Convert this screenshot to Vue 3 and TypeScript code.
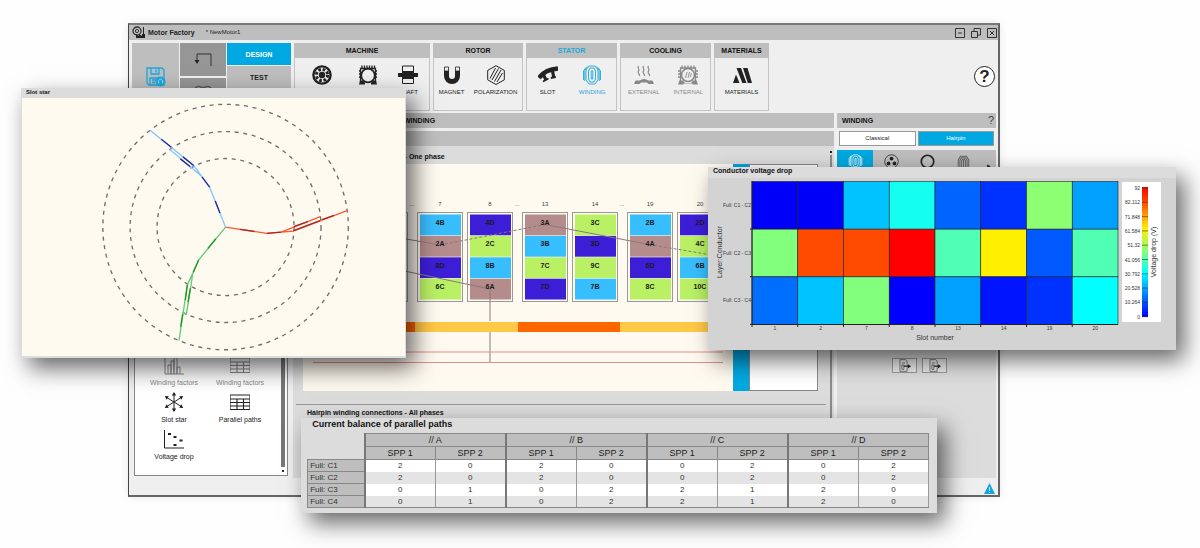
<script setup lang="ts">
interface Tool { label: string; icon: string; state?: string; name?: string }
interface Group { title: string; key: string; active?: boolean; tools: Tool[] }
interface Slot { x: number; n: string; cells: string[] }

const icons: Record<string, string> = {
  motor: '<circle cx="10" cy="10" r="8.6" fill="none" stroke="currentColor" stroke-width="2.4"/><circle cx="10" cy="10" r="5.6" fill="none" stroke="currentColor" stroke-width="3" stroke-dasharray="2.6 1.8"/><circle cx="10" cy="10" r="3.2" fill="currentColor"/>',
  housing: '<circle cx="10" cy="10.5" r="6.8" fill="none" stroke="currentColor" stroke-width="1.8"/><path d="M2.5 17V3.5h15V17M4 3V.5M6.5 3V.5M9 3V.5M11.5 3V.5M14 3V.5M16.500 3V.5M1 6h2M1 9h2M1 12h2M17 6h2M17 9h2M17 12h2" fill="none" stroke="currentColor" stroke-width="1.3"/><path d="M1 19.500l1-4 3 0 2 2.500v1.500zM19 19.500l-1-4-3 0-2 2.500v1.500z" fill="currentColor"/>',
  shaft: '<path d="M4.500 1h11v17.500h-11z" fill="none" stroke="currentColor" stroke-width="1"/><path d="M0 8h4V6h12v2h4v4h-4v2H4v-2H0z" fill="currentColor"/>',
  magnet: '<path d="M2 6v5a8 8 0 0 0 16 0V6h-5v5a3 3 0 0 1-6 0V6z" fill="currentColor"/><path d="M2.500 2h4v4h-4zM13.500 2h4v4h-4z" fill="none" stroke="currentColor" stroke-width=".8"/>',
  polar: '<path d="M10 .7l8.300 4.700v9.400L10 19.500l-8.300-4.700V5.400zM4 13.500L9.500 3M6 15L12.500 3.500M8.500 16.500L15 5M11 17L16.500 8" fill="none" stroke="currentColor" stroke-width="1"/>',
  slot: '<path d="M1 13Q7 4.500 20 3.500" fill="none" stroke="currentColor" stroke-width="4.500"/><path d="M5.500 10l2.500 5M14.500 6l1.200 6" fill="none" stroke="currentColor" stroke-width="3.200"/><path d="M5 16.500l5.500-3M12.800 13l5-1" stroke="currentColor" stroke-width="1.800"/>',
  winding: '<path d="M7 1h6l3 4v10l-3 4H7l-3-4V5zM8 3h4l1.500 3v8L12 17H8l-1.500-3V6zM9.200 6h1.600v8H9.200zM4 2.500L1.500 6v9M16 2.500L18.500 6v9M5.500 1.500L2.800 5.500V16M14.500 1.500l2.700 4V16" fill="none" stroke="currentColor" stroke-width=".9"/>',
  external: '<path d="M4.500 1c-2 2 2 3 0 5s2 3 1 5M9.500 1c-2 2 2 3 0 5s2 3 1 5M14.500 1c-2 2 2 3 0 5s2 3 1 5" fill="none" stroke="currentColor" stroke-width="1.200"/><path d="M0 19l1.500-3.500h4Q10 12.500 14.500 15.500h4L20 19h-5.500L13 17.500H7L5.500 19z" fill="currentColor"/>',
  internal: '<circle cx="10" cy="10" r="6.500" fill="none" stroke="currentColor" stroke-width="1.500"/><path d="M2.500 17V3h15v14M4 3V.500M7 3V.500M10 3V.500M13 3V.500M16 3V.500M0 6h2M0 9h2M0 12h2M18 6h2M18 9h2M18 12h2" fill="none" stroke="currentColor" stroke-width="1.300"/><path d="M0 19.500l1.500-4h3.500l2 2.500h6l2-2.500h3.500l1.500 4h-5l-1-1H6l-1 1z" fill="currentColor"/><path d="M7.500 13l1.500-6M10 13l1.500-6M12.500 12l.8-4" stroke="currentColor" stroke-width=".9"/>',
  materials: '<path d="M4.500 3H9l5.500 15h-4.200zM11 3h4.500L20 18h-4.200zM1 18l3-8.500L7.500 18z" fill="currentColor"/>',
  coil: '<path d="M3 17V8l3-5h8l3 5v9M5.200 18V8.500L7.300 5h5.400l2.100 3.500V18M7.500 18V9l1.200-2h2.600l1.200 2v9M10 8v10" fill="none" stroke="currentColor" stroke-width="1.400"/>',
  phases: '<circle cx="10" cy="10" r="9" fill="none" stroke="currentColor" stroke-width="1"/><circle cx="10" cy="6" r="2.500" fill="currentColor"/><circle cx="6" cy="12.500" r="2.500" fill="currentColor"/><circle cx="14" cy="12.500" r="2.500" fill="currentColor"/>',
  ring: '<circle cx="10" cy="10" r="8.300" fill="none" stroke="currentColor" stroke-width="2.200"/>',
  bars: '<path d="M1 0v19h19M4 19v-9h3v9M7 19V6h3v13M10 19V2h3v17M13 19v-7h3v7" fill="none" stroke="currentColor" stroke-width="1"/>',
  grid: '<path d="M0 3h20v14.500H0zM0 7h20M0 10.500h20M0 14h20M7 7v10.500M13.500 7v10.500" fill="none" stroke="currentColor" stroke-width="1.100"/>',
  star: '<path d="M10 1v18M2 5l16 10M2 15L18 5" fill="none" stroke="currentColor" stroke-width="1"/><path d="M10 0l2.200 3.500H7.800zM10 20l2.200-3.500H7.800zM.8 4l4 .3-2.200 3.400zM.8 16l4-.3-2.200-3.400zM19.200 4l-4 .3 2.200 3.400zM19.200 16l-4-.3 2.200-3.400z" fill="currentColor"/>',
  scatter: '<path d="M.5 1v18H20" fill="none" stroke="currentColor" stroke-width="1"/><path d="M4 4h3v2H4zM9.500 7h3v2h-3zM15.500 10.500h3v2h-3zM9.500 15h3v2h-3z" fill="currentColor"/>',
  page: '<path d="M3 1h9l2 2v5M14 13v6H3V1M6 6h5M6 9h3v7H6z" fill="none" stroke="#666" stroke-width="1.300"/><path d="M9 10h6V7.500l5 3.500-5 3.500V12H9z" fill="currentColor"/>',
}

const groups: Group[] = [
  { title: 'MACHINE', key: 'machine', tools: [
    { label: '', name: 'Motor', icon: 'motor' }, { label: '', name: 'Housing', icon: 'housing' }, { label: 'SHAFT', icon: 'shaft' }] },
  { title: 'ROTOR', key: 'rotor', tools: [{ label: 'MAGNET', icon: 'magnet' }, { label: 'POLARIZATION', icon: 'polar' }] },
  { title: 'STATOR', key: 'stator', active: true, tools: [{ label: 'SLOT', icon: 'slot' }, { label: 'WINDING', icon: 'winding', state: 'on' }] },
  { title: 'COOLING', key: 'cooling', tools: [{ label: 'EXTERNAL', icon: 'external', state: 'off' }, { label: 'INTERNAL', icon: 'internal', state: 'off' }] },
  { title: 'MATERIALS', key: 'materials', tools: [{ label: 'MATERIALS', icon: 'materials' }] },
]

const results: Tool[] = [
  { label: 'Winding factors', icon: 'bars', state: 'off' },
  { label: 'Winding factors', icon: 'grid', state: 'off' },
  { label: 'Slot star', icon: 'star' },
  { label: 'Parallel paths', icon: 'grid' },
  { label: 'Voltage drop', icon: 'scatter' },
]

const phaseColor: Record<string, string> = { A: '#b48c8c', B: '#37beff', C: '#b9f064', D: '#3c1ed7' }
const slots: Slot[] = [
  { x: 417, n: '7', cells: ['4B', '2A', '8D', '6C'] },
  { x: 467, n: '8', cells: ['4D', '2C', '8B', '6A'] },
  { x: 522, n: '13', cells: ['3A', '3B', '7C', '7D'] },
  { x: 572, n: '14', cells: ['3C', '3D', '9C', '7B'] },
  { x: 627, n: '19', cells: ['2B', '4A', '6D', '8C'] },
  { x: 677, n: '20', cells: ['2D', '4C', '6B', '10C'] },
]
const colorOf = (cell: string): string => phaseColor[cell.slice(-1)]

const heat: string[][] = [
  ['#0000fa', '#0000fa', '#00c3ff', '#14fff0', '#0064ff', '#0032ff', '#8cff73', '#00a0ff'],
  ['#82ff7d', '#ff4b00', '#ff4b00', '#ff0000', '#50ffb4', '#fff000', '#005aff', '#50ffb4'],
  ['#006eff', '#00c3ff', '#82ff7d', '#0000ff', '#00a0ff', '#0014ff', '#0032ff', '#00ffff'],
]
const heatCols = ['1', '2', '7', '8', '13', '14', '19', '20']
const heatRows = ['Full: C1 - C2', 'Full: C2 - C3', 'Full: C3 - C4']
const scale = ['92', '82.112', '71.848', '61.584', '51.32', '41.056', '30.792', '20.528', '10.264', '0']
const cellW = 366 / 8
const cellH = 143 / 3

const paths = ['A', 'B', 'C', 'D']
const balance = [
  { name: 'Full: C1', v: [2, 0, 2, 0, 0, 2, 0, 2] },
  { name: 'Full: C2', v: [2, 0, 2, 0, 0, 2, 0, 2] },
  { name: 'Full: C3', v: [0, 1, 0, 2, 2, 1, 2, 0] },
  { name: 'Full: C4', v: [0, 1, 0, 2, 2, 1, 2, 0] },
]
</script>

<template>
  <main class="stage">
    <div class="window">
      <header class="titlebar">
        <svg class="logo" viewBox="0 0 14 13"><circle cx="5" cy="5" r="4" fill="none" stroke="#333" stroke-width="1.300" /><circle cx="5" cy="5" r="1.600" fill="none" stroke="#333" /><path d="M4 12V8l3 2V8l3 2V8h1V1h1v7h1v4z" fill="#222" /></svg>
        <strong>Motor Factory</strong>
        <span class="doc">* NewMotor1</span>
        <div class="winbtns">
          <button aria-label="Minimize"><svg viewBox="0 0 10 10"><path d="M.5.5h9v9h-9zM3 5h4" /></svg></button>
          <button aria-label="Restore"><svg viewBox="0 0 10 10"><path d="M.5 3.500h6v6h-6zM3 3.500v-3h6.500v6.500h-3" /></svg></button>
          <button aria-label="Close"><svg viewBox="0 0 10 10"><path d="M.5.5h9v9h-9zM3 3l4 4M7 3l-4 4" /></svg></button>
        </div>
      </header>

      <div class="ribbon">
        <button class="save" aria-label="Save">
          <svg viewBox="0 0 20 20" fill="none" stroke="#1ba8e0" stroke-width="1.300"><path d="M1 1h15l2 2v15H3l-2-2zM5 1v6h8V1M10 2.500v3M4 18v-7h8M6 13h4M6 15.500h3" /><circle cx="14.500" cy="14.500" r="5" fill="#1ba8e0" stroke="none" /><path d="M12.500 16.500v-3l2-1.500 2 1.500v3" stroke="#cde" stroke-width=".8" /></svg>
        </button>
        <div class="history">
          <button aria-label="Back"><svg viewBox="0 0 18 14"><path d="M17 13V1H3v8" fill="none" stroke="#333" stroke-width="1" /><path d="M.5 7h5L3 11z" fill="#222" /></svg></button>
          <button aria-label="View"><svg viewBox="0 0 22 14"><path d="M1 10V4q4-4 8-1h4q4-3 8 1v6M6 5q5 4 10 0" fill="none" stroke="#555" stroke-width="1.500" /></svg></button>
        </div>
        <div class="modes">
          <button class="on">DESIGN</button>
          <button>TEST</button>
          <button aria-label="Export"></button>
        </div>
        <section v-for="g in groups" :key="g.key" class="group" :class="[g.key, { active: g.active }]">
          <h2>{{ g.title }}</h2>
          <div class="tools">
            <button v-for="t in g.tools" :key="t.icon" :class="t.state" :aria-label="t.label || t.name">
              <svg viewBox="0 0 20 20" v-html="icons[t.icon]" />
              <span>{{ t.label }}</span>
            </button>
          </div>
        </section>
        <button class="help" aria-label="Help">?</button>
      </div>

      <div class="body">
        <aside class="side">
          <div class="results">
            <button v-for="(r, i) in results" :key="i" :class="r.state">
              <svg viewBox="0 0 20 20" v-html="icons[r.icon]" />
              <span>{{ r.label }}</span>
            </button>
            <i class="bar"></i>
            <i class="dot"></i>
          </div>
        </aside>

        <section class="center">
          <h2 class="crumb">WINDING</h2>
          <div class="strip"></div>
          <div class="views">
            <div class="scroll">
              <h3>Hairpin winding connections - One phase</h3>
              <div class="row">
                <svg class="diagram" viewBox="303 164 430 227">
                  <g class="num">
                    <text x="412" y="206">...</text><text x="517" y="206">...</text><text x="622" y="206">...</text>
                  </g>
                  <path class="frame" d="M362 212.500h45.500v89H362" />
                  <g v-for="s in slots" :key="s.n">
                    <text class="num" :x="s.x + 23" y="206">{{ s.n }}</text>
                    <rect class="frame" :x="s.x + 0.5" y="212.500" width="45" height="89" />
                    <rect v-for="(c, i) in s.cells" :key="c" :x="s.x + 3" :y="214.5 + i * 21.4" width="41" height="20.800" :fill="colorOf(c)" />
                  </g>
                  <path class="wire" d="M395 237L440 245M545 224.500L649 244.500M395 269L490 289V321M490 332V362" />
                  <path class="wire dash" d="M440 245L545 224.500M649 244.500L712 255" />
                  <g v-for="s in slots" :key="s.n" class="cell">
                    <text v-for="(c, i) in s.cells" :key="c" :x="s.x + 23" :y="225 + i * 21.4">{{ c }}</text>
                  </g>
                  <path d="M313 327h102.500M517.500 327h102.500" stroke="#ff6600" stroke-width="10" />
                  <path d="M415.500 327h102M620 327h102" stroke="#ffc846" stroke-width="10" />
                  <path class="conn" d="M313 352h410M313 362.500h410" />
                </svg>
                <div class="blue"></div>
                <div class="blank"></div>
              </div>
              <hr />
              <h3 class="lower">Hairpin winding connections - All phases</h3>
            </div>
            <i class="split"></i>
          </div>
        </section>

        <section class="props">
          <h2>WINDING<button class="q" aria-label="Winding help">?</button></h2>
          <div class="switch"><button>Classical</button><button class="on">Hairpin</button></div>
          <div class="panel">
            <div class="tabs">
              <button class="on" aria-label="Coil"><svg viewBox="0 0 20 20" v-html="icons.winding" /></button>
              <button aria-label="Phases"><svg viewBox="0 0 20 20" v-html="icons.phases" /></button>
              <button aria-label="Insulation"><svg viewBox="0 0 20 20" v-html="icons.ring" /></button>
              <button class="dim" aria-label="End winding"><svg viewBox="0 0 20 20" v-html="icons.coil" /></button>
              <span>▸</span>
            </div>
            <div class="exports">
              <button aria-label="Export winding"><svg viewBox="0 0 20 20" v-html="icons.page" /></button>
              <button aria-label="Export data"><svg viewBox="0 0 20 20" v-html="icons.page" /></button>
            </div>
          </div>
        </section>
      </div>
      <footer><svg viewBox="0 0 11 11"><path d="M5.500 0L11 11H0z" fill="#12a5e0" /><path d="M5.500 4v4M5.500 9v1" stroke="#bfe8f8" /></svg></footer>
    </div>

    <section class="float starbox">
      <h3>Slot star</h3>
      <svg viewBox="36 56 1152 776">
        <g class="rings"><circle cx="648" cy="444" r="369" /><circle cx="648" cy="444" r="287" /><circle cx="648" cy="444" r="206" /></g>
        <g class="rays">
          <path d="M648 444L600 324L576 291L552 259L420 152M576 291L544 264L480 211" stroke="#82c8fa" />
          <path d="M631 402L617 366M600 324L577 293M552 259L520 233M485 204L455 180M542 263L512 239" stroke="#2828a0" />
          <path d="M648 444L772 463L852 456L1015 394M815 459L933 413" stroke="#fa5a32" />
          <path d="M692 451L734 457M772 463L815 459M852 455L932 425M938 422L974 409M853 443L895 428" stroke="#a52828" />
          <path d="M648 444L567 543L549 584L533 618L508 785M549 584L543 628L530 706L521 702" stroke="#64c878" />
          <path d="M619 479L595 508M567 543L551 580M533 618L527 664M542 628L535 670M519 706L513 744" stroke="#1e961e" />
        </g>
      </svg>
    </section>

    <section class="float voltage">
      <h3>Conductor voltage drop</h3>
      <svg viewBox="708 178 468 172">
        <defs>
          <linearGradient id="jet" x1="0" y1="0" x2="0" y2="1">
            <stop offset="0" stop-color="#ff0000" /><stop offset=".12" stop-color="#ff4b00" /><stop offset=".32" stop-color="#fff000" />
            <stop offset=".5" stop-color="#82ff7d" /><stop offset=".66" stop-color="#00ffff" /><stop offset=".84" stop-color="#0078ff" /><stop offset="1" stop-color="#0000ff" />
          </linearGradient>
        </defs>
        <g v-for="(r, j) in heat" :key="j">
          <rect v-for="(c, i) in r" :key="i" class="hc" :x="752 + i * cellW" :y="181.5 + j * cellH" :width="cellW" :height="cellH" :fill="c" />
          <text class="tick end" x="751" :y="207 + j * cellH">{{ heatRows[j] }}</text>
          <path class="axis" :d="`M750 ${229 + j * cellH}h2`" />
        </g>
        <path class="axis" d="M752 181v143.500h366" />
        <g v-for="(n, i) in heatCols" :key="n">
          <text class="tick" :x="775 + i * cellW" y="330">{{ n }}</text>
          <path class="axis" :d="`M${752 + i * cellW} 324v3`" />
        </g>
        <text class="name" x="935" y="340">Slot number</text>
        <text class="name" transform="translate(722 252) rotate(-90)">Layer:Conductor</text>
        <rect x="1122" y="182" width="39" height="140" fill="#fff" />
        <rect x="1142" y="187" width="6" height="130" fill="url(#jet)" />
        <g v-for="(n, i) in scale" :key="n">
          <text class="tick end" x="1140" :y="190 + i * 14.3">{{ n }}</text>
          <path class="mark" :d="`M1142 ${188 + i * 14.3}h6`" />
        </g>
        <text class="name" transform="translate(1156 252) rotate(-90)">Voltage drop (V)</text>
      </svg>
    </section>

    <section class="float balance">
      <h3>Current balance of parallel paths</h3>
      <table>
        <colgroup><col class="first" /><col v-for="n in 8" :key="n" /></colgroup>
        <thead>
          <tr><td rowspan="2" class="corner"></td><th v-for="p in paths" :key="p" colspan="2" class="sep">// {{ p }}</th></tr>
          <tr><th v-for="n in 8" :key="n" :class="{ sep: n % 2 === 1 }">SPP {{ n % 2 === 1 ? 1 : 2 }}</th></tr>
        </thead>
        <tbody>
          <tr v-for="b in balance" :key="b.name">
            <th scope="row">{{ b.name }}</th>
            <td v-for="(v, i) in b.v" :key="i" :class="{ sep: i % 2 === 0 }">{{ v }}</td>
          </tr>
        </tbody>
      </table>
    </section>
  </main>
</template>

<style>
body { background: #fff; }
</style>

<style scoped>
* { box-sizing: border-box; }
.stage { position: relative; min-height: 100vh; padding: 23px 200px 52px 128px; overflow: hidden; font-family: "Liberation Sans", Arial, sans-serif; font-size: 7px; line-height: 9px; color: #222; background: #fefefe; }
button { font: inherit; color: inherit; background: none; border: 0; padding: 0; margin: 0; }
h2, h3 { margin: 0; font-size: 7px; font-weight: bold; color: #111; }
svg { display: block; }

.window { display: flex; flex-direction: column; background: #efefef; border: 2px solid #666; border-top-color: #7a7a7a; border-left: 1px solid #444; box-shadow: 0 0 8px #00000018; }
.titlebar { display: flex; align-items: center; height: 15px; padding: 0 1px 0 3px; background: #bebebe; }
.titlebar strong { margin-left: 2px; color: #222; }
.logo { width: 14px; height: 13px; }
.doc { margin-left: 11px; font-size: 6px; }
.winbtns { display: flex; gap: 6px; margin-left: auto; }
.winbtns svg { width: 10px; height: 10px; fill: none; stroke: #333; stroke-width: 1; }

.ribbon { display: flex; height: 73px; padding: 3px 3px 2px; }
.save { display: grid; place-items: center; width: 47px; background: #bebebe; }
.save svg { width: 20px; height: 20px; }
.history { display: grid; grid-template-rows: 33px 1fr; gap: 2px; width: 46px; margin-left: 1px; }
.history button { display: grid; place-items: center; background: #969696; }
.history button + button { align-items: start; padding-top: 7px; }
.history button svg { width: 18px; }
.modes { display: grid; grid-template-rows: 22px 22px 1fr; gap: 1px; width: 64px; margin: 0 3px 0 1px; }
.modes button { background: #bebebe; font-weight: bold; }
.modes .on { background: #00a8e1; color: #fff; }
.group { flex: none; margin-right: 3px; border: 1px solid #c3c3c3; border-top: 0; }
.machine { width: 136px; }
.rotor { width: 90px; }
.stator, .cooling { width: 91px; }
.materials { width: 55px; }
.group h2 { margin: 0 -1px; line-height: 15px; text-align: center; background: #bebebe; }
.group.active h2, .tools .on { color: #1ba8dc; }
.tools { display: flex; justify-content: space-around; padding-top: 7px; font-size: 6px; }
.machine .tools { display: grid; grid-template-columns: 46px 46px 34px; justify-content: center; }
.tools button { display: flex; flex-direction: column; align-items: center; gap: 3px; min-width: 20px; }
.tools svg { width: 20px; height: 20px; }
.tools .off { color: #888; }
.help { width: 21px; height: 21px; margin: 23px 0 0 auto; border: 1px solid #222; border-radius: 50%; background: #fff; font-size: 17px; font-weight: bold; line-height: 18px; }

.body { display: flex; }
.side { display: flex; flex: none; width: 161px; padding: 0 2px 2px 5px; }
.results { position: relative; display: grid; grid-template-columns: 66px 66px; grid-auto-rows: 37px; align-content: end; flex: 1; padding: 0 0 14px 6px; background: #fff; border: 1px solid #888; }
.results button { display: flex; flex-direction: column; align-items: center; justify-content: flex-end; gap: 3px; }
.results svg { width: 20px; height: 20px; }
.results .off { color: #888; }
.bar { position: absolute; right: 2px; top: 6px; bottom: 8px; width: 4px; background: #777; }
.dot { position: absolute; right: 3px; bottom: 3px; width: 2px; height: 2px; background: #333; }

.center { display: flex; flex: 1; flex-direction: column; min-width: 0; margin-left: 3px; }
.crumb, .strip, .props h2 { height: 15px; line-height: 15px; background: #bebebe; }
.crumb { padding-left: 111px; }
.strip { margin-top: 3px; }
.views { position: relative; display: flex; flex: 1; background: #dcdcdc; }
.scroll { flex: 1; padding: 0 16px 58px 10px; }
.scroll h3 { padding: 3px 0 0 4px; line-height: 15px; }
.scroll .lower { padding-top: 0; }
.row { display: flex; }
.diagram { flex: 1; min-width: 0; background: #fffaf0; }
.blue { width: 16px; background: #00a8e1; }
.blank { width: 69px; background: #fff; border: 1px solid #888; }
.scroll hr { height: 1px; margin: 13px -8px 0 -7px; border: 0; background: #999; }
.split { position: absolute; right: 2px; top: 9px; bottom: 0; width: 2px; background: #8c8c8c; }
.split::before { content: ""; position: absolute; top: -4px; left: 0; width: 2px; height: 2px; background: #222; }
.num { font-size: 6px; text-anchor: middle; fill: #444; }
.frame { fill: none; stroke: #999; stroke-width: 1; }
.wire { fill: none; stroke: #8c7878; stroke-width: 1; }
.dash { stroke-dasharray: 3 2; }
.cell { font-size: 7px; font-weight: bold; text-anchor: middle; fill: #1a1a1a; }
.conn { stroke: #e88c8c; stroke-width: 1; }

.props { display: flex; flex: none; flex-direction: column; width: 159px; margin: 0 2px 0 3px; }
.props h2 { display: flex; justify-content: space-between; padding: 0 2px 0 5px; }
.q { font-size: 11px; font-weight: normal; color: #444; }
.switch { display: grid; grid-template-columns: 1fr 1fr; gap: 2px; height: 15px; margin: 3px 2px 4px; font-size: 6px; }
.switch button { background: #fff; border: 1px solid #999; }
.switch .on { background: #00a8e1; color: #fff; }
.panel { flex: 1; background: #dcdcdc; }
.tabs { display: grid; grid-template-columns: repeat(4, 36px) 1fr; height: 36px; background: #bebebe; }
.tabs button { display: flex; justify-content: center; padding-top: 4px; }
.tabs svg { width: 15px; height: 15px; }
.tabs .on { background: #00a8e1; color: #fff; }
.tabs .dim { color: #666; }
.tabs span { padding: 11px 0 0 6px; }
.exports { display: flex; justify-content: center; gap: 5px; margin-top: 172px; padding-left: 5px; }
.exports button { display: grid; place-items: center; width: 25px; height: 15px; background: #e8e8e8; border: 1px solid #999; }
.exports svg { width: 13px; height: 13px; }
footer { display: flex; justify-content: flex-end; height: 17px; padding: 5px 3px 0; }
footer svg { width: 11px; height: 11px; }

.float { position: absolute; box-shadow: 8px 10px 22px #00000099; background: #dcdcdc; }
.starbox { left: 1.75%; width: 32.1%; top: 88px; padding: 0 1px 2px; }
.starbox h3 { height: 10px; padding-left: 4px; font-size: 6px; line-height: 8px; }
.starbox svg { width: 100%; background: #fffaf0; }
.rings { fill: none; stroke: #6e6e6e; stroke-width: 4; stroke-dasharray: 12 14; }
.rays { fill: none; stroke-width: 4; }
.voltage { left: 59%; right: 2%; top: 167px; background: #d3d3d3; }
.voltage h3 { height: 11px; padding-left: 5px; line-height: 8px; background: #dcdcdc; }
.hc { stroke: #222; stroke-width: .6; }
.axis { fill: none; stroke: #222; stroke-width: 1; }
.mark { stroke: #333; stroke-width: .6; }
.tick { font-size: 5px; text-anchor: middle; fill: #333; }
.tick.end { text-anchor: end; }
.name { font-size: 7px; text-anchor: middle; fill: #333; }
.balance { left: 25.1%; right: 21.9%; top: 418px; padding: 1px 8px 5px 6px; }
.balance h3 { padding-left: 5px; font-size: 9px; line-height: 10px; margin-bottom: 4px; }
table { width: 100%; table-layout: fixed; border-collapse: collapse; font-size: 8px; line-height: 11px; color: #333; }
.first { width: 57px; }
td, th { height: 12px; padding: 0; font-weight: normal; text-align: center; border-left: 1px solid #999; border-right: 1px solid #999; }
thead th { height: 13px; font-size: 9px; line-height: 12px; background: #bebebe; border: 1px solid #888; color: #222; }
thead .corner { border: 0; }
tbody td { background: #fff; }
tbody tr:nth-child(even) td { background: #e4e4e4; }
tbody th { padding-left: 2px; text-align: left; background: #bebebe; border: 1px solid #888; }
tbody tr:last-child td { border-bottom: 1px solid #888; }
td.sep, th.sep { border-left: 2px solid #777; }
</style>
